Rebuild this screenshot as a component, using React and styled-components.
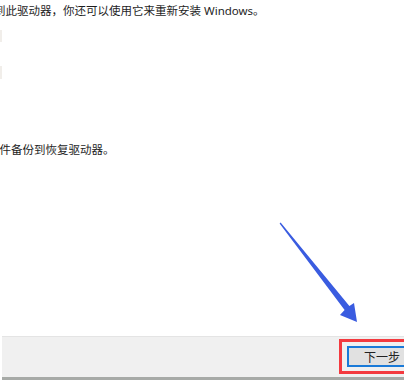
import React from "react";
import styled, { createGlobalStyle } from "styled-components";

const Global = createGlobalStyle`
  html, body {
    margin: 0;
    padding: 0;
    background: #ffffff;
  }
`;

const Page = styled.div`
  position: relative;
  width: 404px;
  height: 380px;
  overflow: hidden;
  background: #ffffff;
  display: flex;
  flex-direction: column;
  font-family: "Noto Sans", "Noto Sans CJK SC", sans-serif;
  color: #1e1e1e;
`;

const Body = styled.div`
  flex: 1;
  display: flex;
  flex-direction: column;
  padding-top: 3px;
`;

const Line = styled.p`
  margin: 0;
  margin-top: ${(p) => p.$top || 0}px;
  margin-left: ${(p) => p.$shift || 0}px;
  font-size: 11.5px;
  line-height: 16px;
  white-space: nowrap;
`;

const Edge = styled.div`
  width: 2px;
  height: ${(p) => p.$h}px;
  margin-top: ${(p) => p.$top}px;
  background: #f1eeea;
`;

const Footer = styled.div`
  height: 38px;
  margin-left: 2px;
  background: #f0f0f0;
  border-top: 1px solid #e4e4e4;
  border-bottom: 3px solid #a7aaa7;
  display: flex;
  justify-content: flex-end;
  align-items: flex-start;
  padding-top: 2px;
`;

const Highlight = styled.div`
  width: 60px;
  height: 26px;
  margin-right: -3px;
  border: 3px solid #f33a3f;
  border-right: none;
  padding: 3px 0 0 5px;
  box-sizing: content-box;
`;

const NextButton = styled.button`
  width: 60px;
  height: 21px;
  padding: 0 0 0 15px;
  border: 2px solid #1a7ad8;
  border-right: none;
  background: #e1e1e1;
  font-family: "Noto Sans CJK SC", sans-serif;
  font-size: 12px;
  color: #222;
  text-align: left;
  line-height: 17px;
  white-space: nowrap;
  overflow: hidden;
`;

const ArrowLayer = styled.svg`
  position: absolute;
  left: 0;
  top: 0;
  pointer-events: none;
`;

const Arrow = () => (
  <ArrowLayer width="404" height="380" viewBox="0 0 404 380">
    <polygon
      points="280.6,222.6 349.4,306.1 354,303 357,322 340,315 344.6,309.9 279.6,223.4"
      fill="#3a5ce0"
    />
  </ArrowLayer>
);

const App = () => {
  return (
    <>
      <Global />
      <Page>
        <Body>
          <Line $shift={-6}>到此驱动器，你还可以使用它来重新安装 Windows。</Line>
          <Edge $top={11} $h={12} />
          <Edge $top={24} $h={13} />
          <Line $top={63} $shift={-12}>文件备份到恢复驱动器。</Line>
        </Body>
        <Footer>
          <Highlight>
            <NextButton>下一步</NextButton>
          </Highlight>
        </Footer>
        <Arrow />
      </Page>
    </>
  );
};

export default App;
